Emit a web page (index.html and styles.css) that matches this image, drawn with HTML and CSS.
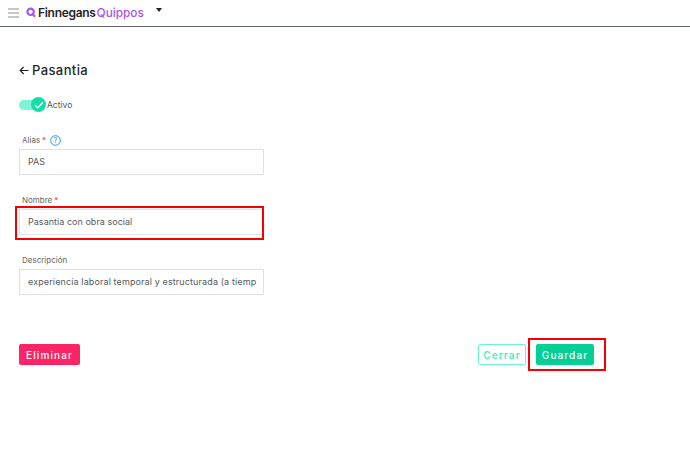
FILE: index.html
```html
<!DOCTYPE html>
<html lang="es">
<head>
<meta charset="utf-8">
<title>Pasantia</title>
<link rel="stylesheet" href="styles.css">
</head>
<body>
<header class="topbar">
  <svg class="burger" width="11" height="10" viewBox="0 0 11 10"><path d="M0 1h11M0 5h11M0 9h11" stroke="#8a8f94" stroke-width="1"/></svg>
  <svg class="logo-mark" width="10" height="11" viewBox="0 0 10 11"><circle cx="4.6" cy="4.8" r="3.2" fill="none" stroke="#a855e8" stroke-width="2.2"/><path d="M6.5 7l2.6 2.8" stroke="#a855e8" stroke-width="2.2"/></svg>
  <span class="brand-dark">Finnegans</span><span class="brand-light">Quippos</span>
  <span class="caret"></span>
</header>
<main class="page">
  <h1 class="title"><svg width="10" height="9" viewBox="0 0 10 9"><path d="M9.5 4.5H1.2M4.6 1L1.2 4.5 4.6 8" fill="none" stroke="#222" stroke-width="1.2"/></svg>Pasantia</h1>
  <div class="toggle-row">
    <span class="toggle"><span class="knob"><svg width="10" height="8" viewBox="0 0 10 8"><path d="M1 4.2l2.7 2.6L9 1.2" fill="none" stroke="#fff" stroke-width="1.3"/></svg></span></span>
    <span class="toggle-label">Activo</span>
  </div>
  <div class="field first">
    <label class="label">Alias <span class="req">*</span><svg class="help" width="11" height="11" viewBox="0 0 11 11"><circle cx="5.5" cy="5.5" r="4.8" fill="none" stroke="#1c9fc4" stroke-width="1"/><text x="5.5" y="8.2" text-anchor="middle" font-size="7.5" font-family="Inter, sans-serif" fill="#1c9fc4">?</text></svg></label>
    <div class="input">PAS</div>
  </div>
  <div class="field">
    <label class="label">Nombre <span class="req">*</span></label>
    <div class="input">Pasantia con obra social<span class="mark mark-name"></span></div>
  </div>
  <div class="field">
    <label class="label">Descripción</label>
    <div class="input clip"><span class="clip-text">experiencia laboral temporal y estructurada (a tiempo parcial)</span></div>
  </div>
  <div class="actions">
    <button class="btn danger">Eliminar</button>
    <div class="actions-right">
      <button class="btn ghost">Cerrar</button>
      <button class="btn save">Guardar<span class="mark mark-save"></span></button>
    </div>
  </div>
</main>
</body>
</html>
```
FILE: styles.css
```css
* { box-sizing: border-box; }
html, body { margin: 0; padding: 0; }
body { width: 690px; height: 465px; background: #fff; font-family: "Inter", "Noto Sans", sans-serif; color: #4a4f55; overflow: hidden; }
.topbar { height: 27px; border-bottom: 1px solid #5f666c; display: flex; align-items: center; padding: 0 0 1px 8px; }
.burger { margin-right: 7px; }
.logo-mark { margin-right: 2px; }
.brand-dark { font-size: 12px; font-weight: 600; color: #1f2328; letter-spacing: -0.3px; }
.brand-light { font-size: 11.8px; font-weight: 500; color: #a855e8; margin-left: 1px; }
.caret { width: 0; height: 0; border-left: 3.5px solid transparent; border-right: 3.5px solid transparent; border-top: 4px solid #222; margin: -6px 0 0 12px; }
.page { padding: 35px 0 0 19px; width: 606px; }
.title { margin: 0; display: flex; align-items: center; gap: 3px; font-size: 13px; font-weight: 500; line-height: 16px; color: #24282c; letter-spacing: 0.4px; }
.toggle-row { display: flex; align-items: center; margin-top: 19px; height: 16px; }
.toggle { width: 26px; height: 10px; border-radius: 5px; background: #7df5d2; display: block; position: relative; }
.knob { position: absolute; right: -1px; top: -3px; width: 15px; height: 15px; border-radius: 50%; background: #14dfa6; display: flex; align-items: center; justify-content: center; }
.toggle-label { font-size: 8.5px; margin-left: 2px; color: #555; }
.field { width: 245px; margin-top: 18px; }
.field.first { margin-top: 20px; }
.label { display: flex; align-items: flex-start; height: 16px; line-height: 15px; padding-left: 3px; font-size: 8px; color: #666; gap: 2px; }
.req { color: #e33; }
.help { margin: 2px 0 0 2px; }
.input { position: relative; height: 26px; border: 1px solid #dfe1e3; padding-left: 8px; font-size: 9px; line-height: 24px; letter-spacing: 0.03px; color: #555a60; }
.clip { padding-right: 7px; }
.clip-text { display: block; overflow: hidden; white-space: nowrap; letter-spacing: 0.12px; }
.actions { display: flex; justify-content: space-between; align-items: center; margin-top: 49px; }
.actions-right { display: flex; gap: 10px; margin-right: 12px; }
.btn { height: 21px; border-radius: 2px; border: 1px solid transparent; font-family: inherit; font-size: 10px; font-weight: 500; letter-spacing: 1.1px; padding: 0; position: relative; }
.danger { width: 61px; background: #fb2464; color: #fff; }
.ghost { width: 48px; background: #fff; border-color: #6ff5d0; color: #4eeec2; font-weight: 600; }
.save { width: 58px; background: #04cf94; color: #fff; }
.mark { position: absolute; border: 2.5px solid #f40000; pointer-events: none; }
.mark-name { left: -5px; top: -4px; width: 249px; height: 34px; }
.mark-save { left: -9px; top: -7px; width: 78px; height: 33px; }
```
